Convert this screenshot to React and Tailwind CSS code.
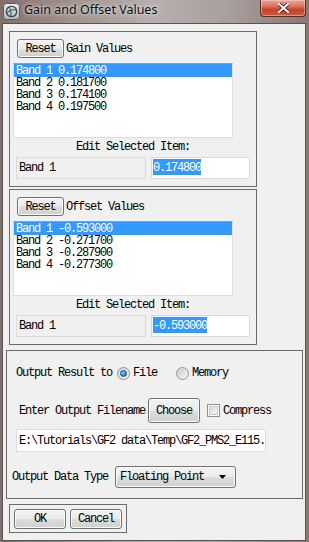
import React from "react";

function Btn({ children, className = "" }) {
  return (
    <div
      className={`flex items-center justify-center rounded-[3px] border border-[#707070] bg-[linear-gradient(#f2f2f2_0%,#ebebeb_50%,#dddddd_50%,#cfcfcf_100%)] shadow-[inset_0_0_0_1px_#fbfbfb] ${className}`}
    >
      {children}
    </div>
  );
}

function Radio({ checked }) {
  return (
    <div className="flex h-[13px] w-[13px] items-center justify-center rounded-full border border-[#8e8f8f] bg-[linear-gradient(135deg,#d6d6d6,#f6f6f6)]">
      {checked ? (
        <div className="h-[7px] w-[7px] rounded-full border border-[#1b4f80] bg-[radial-gradient(circle_at_40%_35%,#8fdcff,#2a84c8_60%,#11508a)]" />
      ) : (
        <div className="h-[9px] w-[9px] rounded-full bg-[linear-gradient(135deg,#cbcbcb,#f4f4f4)]" />
      )}
    </div>
  );
}

function ListBox({ rows }) {
  return (
    <div className="ml-[3px] mt-[5px] h-[75px] w-[220px] border border-[#dcdce4] border-t-[#9c9c9c] bg-white">
      {rows.map((r, i) => (
        <div
          key={i}
          className={`flex h-[12px] items-center whitespace-pre pl-[2px] ${
            i === 0 ? "bg-[#3399ff] text-white h-[13px]" : ""
          }`}
        >
          {r}
        </div>
      ))}
    </div>
  );
}

function GroupPanel({ title, rows, value, top }) {
  return (
    <div
      className={`ml-[6px] flex h-[156px] w-[248px] flex-col border border-[#6a6a6a] ${top}`}
    >
      <div className="ml-[7px] mt-[7px] flex h-[19px] items-center">
        <Btn className="h-[19px] w-[47px]">Reset</Btn>
        <span className="ml-[2px] whitespace-pre">{title}</span>
      </div>
      <ListBox rows={rows} />
      <div className="mt-[3px] flex h-[12px] items-center justify-center whitespace-pre">
        Edit Selected Item:
      </div>
      <div className="ml-[6px] mt-[4px] flex gap-[5px]">
        <div className="h-[22px] w-[130px] border border-[#d9d9d9] bg-[#f0f0f0] pl-[2px] pt-[4px] whitespace-pre">
          Band 1
        </div>
        <div className="h-[22px] w-[99px] border border-[#d9d9d9] bg-white pl-[1px] pt-[1px]">
          <span className="inline-block bg-[#3399ff] pt-[3px] pb-[1px] text-white">
            {value}
          </span>
        </div>
      </div>
    </div>
  );
}

export default function App() {
  return (
    <div className="relative h-[542px] w-[309px] overflow-hidden bg-[linear-gradient(90deg,#846f68_0%,#9f908b_22%,#b7b0ae_50%,#a89e9b_75%,#8a7873_100%)] text-[12px] leading-[12px] tracking-[-1.2px] text-black font-['Liberation_Mono','DejaVu_Sans_Mono',monospace]">
      {/* title bar */}
      <div className="flex h-[23px] items-start">
        <svg
          className="ml-[3px] mt-[3px]"
          width="17"
          height="17"
          viewBox="0 0 17 17"
        >
          <defs>
            <linearGradient id="ig" x1="0" y1="0" x2="0" y2="1">
              <stop offset="0" stopColor="#e8edf1" />
              <stop offset="1" stopColor="#aeb8c1" />
            </linearGradient>
          </defs>
          <rect x="0.5" y="0.5" width="16" height="16" rx="3" fill="url(#ig)" stroke="#4f5d69" />
          <circle cx="8.5" cy="8.5" r="5.2" fill="none" stroke="#3c4a56" strokeWidth="1.3" />
          <path d="M3.5 10.5 C6 7 11 6 13.8 7.2" fill="none" stroke="#3c4a56" strokeWidth="1.1" />
          <path d="M6 3.8 C8 7 8.5 10 7.5 13.6" fill="none" stroke="#3c4a56" strokeWidth="1" />
        </svg>
        <div className="ml-[4px] mt-[2px] whitespace-pre text-[12.5px] leading-[16px] tracking-normal text-[#101010] font-['Noto_Sans',sans-serif] [text-shadow:0_0_6px_#ddd,0_0_3px_#e6e6e6]">
          Gain and Offset Values
        </div>
        <div className="flex-1" />
        <div className="mr-[3px] flex h-[17px] w-[46px] items-center justify-center rounded-b-[4px] border border-t-0 border-[#5b2a22] bg-[linear-gradient(#eaa797_0%,#d8735f_40%,#c5442b_60%,#cd5a3c_100%)] shadow-[inset_0_0_0_1px_rgba(255,220,210,0.45)]">
          <svg width="11" height="10" viewBox="0 0 11 10">
            <path
              d="M1 1 L10 9 M10 1 L1 9"
              stroke="#3a1a15"
              strokeWidth="3.6"
              strokeLinecap="square"
            />
            <path
              d="M1 1 L10 9 M10 1 L1 9"
              stroke="#ffffff"
              strokeWidth="2"
              strokeLinecap="square"
            />
          </svg>
        </div>
      </div>

      {/* client area */}
      <div className="ml-[2px] flex h-[518px] w-[304px] flex-col border border-[#555] bg-[#f0f0f0]">
        <GroupPanel
          top="mt-[7px]"
          title="Gain Values"
          value="0.174800"
          rows={[
            "Band 1 0.174800",
            "Band 2 0.181700",
            "Band 3 0.174100",
            "Band 4 0.197500",
          ]}
        />
        <GroupPanel
          top="mt-[2px]"
          title="Offset Values"
          value="-0.593000"
          rows={[
            "Band 1 -0.593000",
            "Band 2 -0.271700",
            "Band 3 -0.287900",
            "Band 4 -0.277300",
          ]}
        />

        {/* output frame */}
        <div className="ml-[3px] mt-[5px] flex h-[149px] w-[297px] flex-col border border-[#6a6a6a]">
          <div className="ml-[9px] mt-[14px] flex h-[16px] items-center whitespace-pre">
            <span>Output Result to</span>
            <div className="ml-[5px]">
              <Radio checked />
            </div>
            <span className="ml-[3px]">File</span>
            <div className="ml-[19px]">
              <Radio />
            </div>
            <span className="ml-[3px]">Memory</span>
          </div>

          <div className="ml-[12px] mt-[17px] flex h-[25px] items-center whitespace-pre">
            <span>Enter Output Filename</span>
            <Btn className="ml-[3px] h-[25px] w-[52px]">Choose</Btn>
            <div className="ml-[7px] h-[13px] w-[13px] border border-[#8e8f8f] bg-white p-[1px]">
              <div className="h-full w-full border border-[#c8c8c8] bg-[linear-gradient(135deg,#d8d8d8,#f8f8f8)]" />
            </div>
            <span className="ml-[3px]">Compress</span>
          </div>

          <div className="ml-[9px] mt-[6px] h-[23px] w-[250px] overflow-hidden whitespace-pre border border-[#dcdcdc] bg-white pl-[2px] pt-[5px]">
            E:\Tutorials\GF2 data\Temp\GF2_PMS2_E115.
          </div>

          <div className="ml-[5px] mt-[14px] flex h-[22px] items-center whitespace-pre">
            <span>Output Data Type</span>
            <div className="ml-[7px] flex h-[22px] w-[121px] items-center rounded-[3px] border border-[#707070] bg-[linear-gradient(#f2f2f2_0%,#ebebeb_50%,#dddddd_50%,#cfcfcf_100%)] pl-[4px] pr-[9px] shadow-[inset_0_0_0_1px_#fbfbfb]">
              <span className="flex-1">Floating Point</span>
              <svg width="7" height="4" viewBox="0 0 7 4">
                <path d="M0 0 H7 L3.5 4 Z" fill="#000" />
              </svg>
            </div>
          </div>
        </div>

        {/* buttons frame */}
        <div className="ml-[6px] mt-[5px] flex h-[29px] w-[118px] items-start gap-[4px] border border-[#6a6a6a] pl-[4px] pt-[4px]">
          <Btn className="h-[20px] w-[52px]">OK</Btn>
          <Btn className="h-[20px] w-[52px]">Cancel</Btn>
        </div>
      </div>
    </div>
  );
}
